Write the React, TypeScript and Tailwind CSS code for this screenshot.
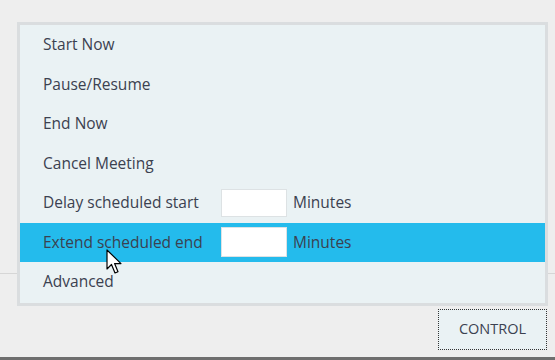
import React from "react";

const font = { fontFamily: '"Open Sans", "Liberation Sans", sans-serif' };

function Row({ label, input, active }: { label: string; input?: boolean; active?: boolean }) {
  return (
    <div className={`flex h-[39.5px] items-center pl-[23px] ${active ? "bg-[#24bbec]" : ""}`}>
      <span className="w-[178px] shrink-0">{label}</span>
      {input && (
        <>
          <div className={`w-[66px] ${active ? "h-[30px]" : "h-[28px]"} bg-white border border-[#dde2e4]`} />
          <span className="ml-[6px]">Minutes</span>
        </>
      )}
    </div>
  );
}

export default function App() {
  return (
    <div className="w-[555px] h-[360px] bg-[#eeeeee] relative overflow-hidden text-[15.5px] text-[#3b4150]" style={font}>
      <div className="h-[22px]" />
      <div className="flex">
        <div className="w-[17px] flex flex-col">
          <div className="h-[251px]" />
          <div className="h-px bg-[#d6d6d6]" />
        </div>
        <div className="w-[531px] border-[3px] border-[#dadddf] bg-[#eaf2f4] pb-[1px]">
          <Row label="Start Now" />
          <Row label="Pause/Resume" />
          <Row label="End Now" />
          <Row label="Cancel Meeting" />
          <Row label="Delay scheduled start" input />
          <Row label="Extend scheduled end" input active />
          <Row label="Advanced" />
        </div>
        <div className="flex-1 flex flex-col">
          <div className="h-[251px]" />
          <div className="h-px bg-[#d6d6d6]" />
        </div>
      </div>
      <div className="flex justify-end pr-[8px] mt-[3px]">
        <div className="w-[109px] h-[41px] border border-dotted border-[#333] bg-[#eaf2f4] flex items-center justify-center text-[14.5px]">
          CONTROL
        </div>
      </div>
      <div className="absolute left-0 right-0 bottom-0 h-[3px] bg-[#6e6e6e]" />
      <svg className="absolute left-[106px] top-[249px]" width="18" height="28" viewBox="0 0 18 28">
        <path d="M1 1 L1 20 L5.5 15.5 L9 24 L12 22.8 L8.6 14.6 L15 14.6 Z" fill="#fff" stroke="#000" strokeWidth="1.2" strokeLinejoin="round" />
      </svg>
    </div>
  );
}
